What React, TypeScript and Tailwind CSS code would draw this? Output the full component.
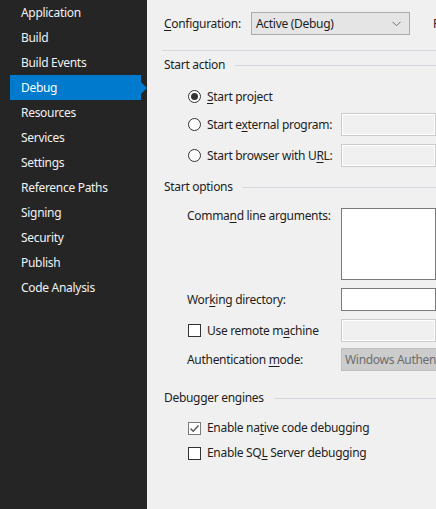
import { ReactNode } from 'react';

const font = { fontFamily: '"Noto Sans", "Open Sans", sans-serif' };

const navItems = [
  'Application',
  'Build',
  'Build Events',
  'Debug',
  'Resources',
  'Services',
  'Settings',
  'Reference Paths',
  'Signing',
  'Security',
  'Publish',
  'Code Analysis',
];

function Key({ children }: { children: ReactNode }) {
  return <span className="underline underline-offset-2 decoration-1">{children}</span>;
}

function SectionHeading({ title, className = '' }: { title: string; className?: string }) {
  return (
    <div className={`flex items-center h-[20px] pl-[17px] ${className}`}>
      <span className="whitespace-nowrap">{title}</span>
      <div className="flex-1 h-px bg-[#d5d9de] ml-[10px]" />
    </div>
  );
}

function Radio({ checked }: { checked?: boolean }) {
  return (
    <div className="w-[13px] h-[13px] rounded-full border border-[#333333] bg-white flex items-center justify-center shrink-0">
      {checked && <div className="w-[7px] h-[7px] rounded-full bg-[#333333]" />}
    </div>
  );
}

function Checkbox({ checked }: { checked?: boolean }) {
  return (
    <div
      className={`w-[13px] h-[13px] border bg-white flex items-center justify-center shrink-0 ${checked ? 'border-[#7a7a7a]' : 'border-[#333333]'}`}
    >
      {checked && (
        <svg width="11" height="11" viewBox="0 0 11 11">
          <path d="M1.5 5.5 L4.2 8.2 L9.5 2.5" fill="none" stroke="#555555" strokeWidth="1.4" />
        </svg>
      )}
    </div>
  );
}

function DisabledBox({ className = '' }: { className?: string }) {
  return (
    <div className={`w-[200px] h-[23px] border border-[#cccccc] bg-[#f0f0f0] shadow-[inset_0_0_0_1px_#ffffff] ${className}`} />
  );
}

export default function App() {
  return (
    <div className="flex w-[436px] h-[509px] overflow-hidden text-[12px] leading-[16px] tracking-[-0.3px]" style={font}>
      <div className="w-[147px] shrink-0 bg-[#252526] text-[#f1f1f1]">
        {navItems.map((item) =>
          item === 'Debug' ? (
            <div key={item} className="relative h-[25px] ml-[10px] w-[131px] bg-[#007acc] flex items-center pl-[11px] text-white">
              {item}
              <div className="absolute right-[-6px] top-[6.5px] w-0 h-0 border-y-[6px] border-y-transparent border-l-[6px] border-l-[#007acc]" />
            </div>
          ) : (
            <div key={item} className="h-[25px] flex items-center pl-[21px]">
              {item}
            </div>
          )
        )}
      </div>

      <div className="flex-1 bg-[#f0f0f0] text-[#1e1e1e] flex flex-col min-w-0">
        <div className="flex items-center h-[23px] mt-[12px] pl-[17px]">
          <span className="w-[87px] shrink-0">
            <Key>C</Key>onfiguration:
          </span>
          <div className="w-[159px] h-[23px] shrink-0 border border-[#acacac] bg-[#e5e5e5] flex items-center justify-between pl-[4px] pr-[8px]">
            <span>Active (Debug)</span>
            <svg width="9" height="6" viewBox="0 0 9 6">
              <path d="M0.5 0.8 L4.5 4.8 L8.5 0.8" fill="none" stroke="#707070" strokeWidth="1" />
            </svg>
          </div>
          <span className="ml-[23px] whitespace-nowrap">Platform:</span>
        </div>

        <div className="h-px bg-[#d5d9de] ml-[15px] mt-[15px]" />

        <SectionHeading title="Start action" className="mt-[4px]" />

        <div className="flex items-center h-[23px] mt-[10px] pl-[41px]">
          <Radio checked />
          <span className="ml-[6px]">
            <Key>S</Key>tart project
          </span>
        </div>
        <div className="flex items-center h-[23px] mt-[5px] pl-[41px]">
          <div className="w-[153px] shrink-0 flex items-center">
            <Radio />
            <span className="ml-[6px] whitespace-nowrap">
              Start e<Key>x</Key>ternal program:
            </span>
          </div>
          <DisabledBox />
        </div>
        <div className="flex items-center h-[23px] mt-[8px] pl-[41px]">
          <div className="w-[153px] shrink-0 flex items-center">
            <Radio />
            <span className="ml-[6px] whitespace-nowrap">
              Start browser with U<Key>R</Key>L:
            </span>
          </div>
          <DisabledBox />
        </div>

        <SectionHeading title="Start options" className="mt-[10px]" />

        <div className="flex items-start mt-[11px] pl-[40px]">
          <span className="w-[154px] shrink-0 whitespace-nowrap">
            Comma<Key>n</Key>d line arguments:
          </span>
          <div className="w-[200px] h-[72px] border border-[#7a7a7a] bg-white" />
        </div>

        <div className="flex items-center mt-[8px] pl-[40px]">
          <span className="w-[154px] shrink-0 whitespace-nowrap">
            Wor<Key>k</Key>ing directory:
          </span>
          <div className="w-[200px] h-[23px] border border-[#7a7a7a] bg-white" />
        </div>

        <div className="flex items-center mt-[8px] pl-[41px]">
          <div className="w-[153px] shrink-0 flex items-center">
            <Checkbox />
            <span className="ml-[6px] whitespace-nowrap">
              Use remote m<Key>a</Key>chine
            </span>
          </div>
          <DisabledBox />
        </div>

        <div className="flex items-center mt-[6px] pl-[40px]">
          <span className="w-[154px] shrink-0 whitespace-nowrap">
            Authentication <Key>m</Key>ode:
          </span>
          <div className="w-[200px] h-[23px] border border-[#bfbfbf] bg-[#cccccc] text-[#6d6d6d] flex items-center pl-[3px] whitespace-nowrap">
            Windows Authentication
          </div>
        </div>

        <SectionHeading title="Debugger engines" className="mt-[17px]" />

        <div className="flex items-center h-[20px] mt-[10px] pl-[41px]">
          <Checkbox checked />
          <span className="ml-[6px]">
            Enable na<Key>t</Key>ive code debugging
          </span>
        </div>
        <div className="flex items-center h-[20px] mt-[5px] pl-[41px]">
          <Checkbox />
          <span className="ml-[6px]">
            Enable SQ<Key>L</Key> Server debugging
          </span>
        </div>
      </div>
    </div>
  );
}
